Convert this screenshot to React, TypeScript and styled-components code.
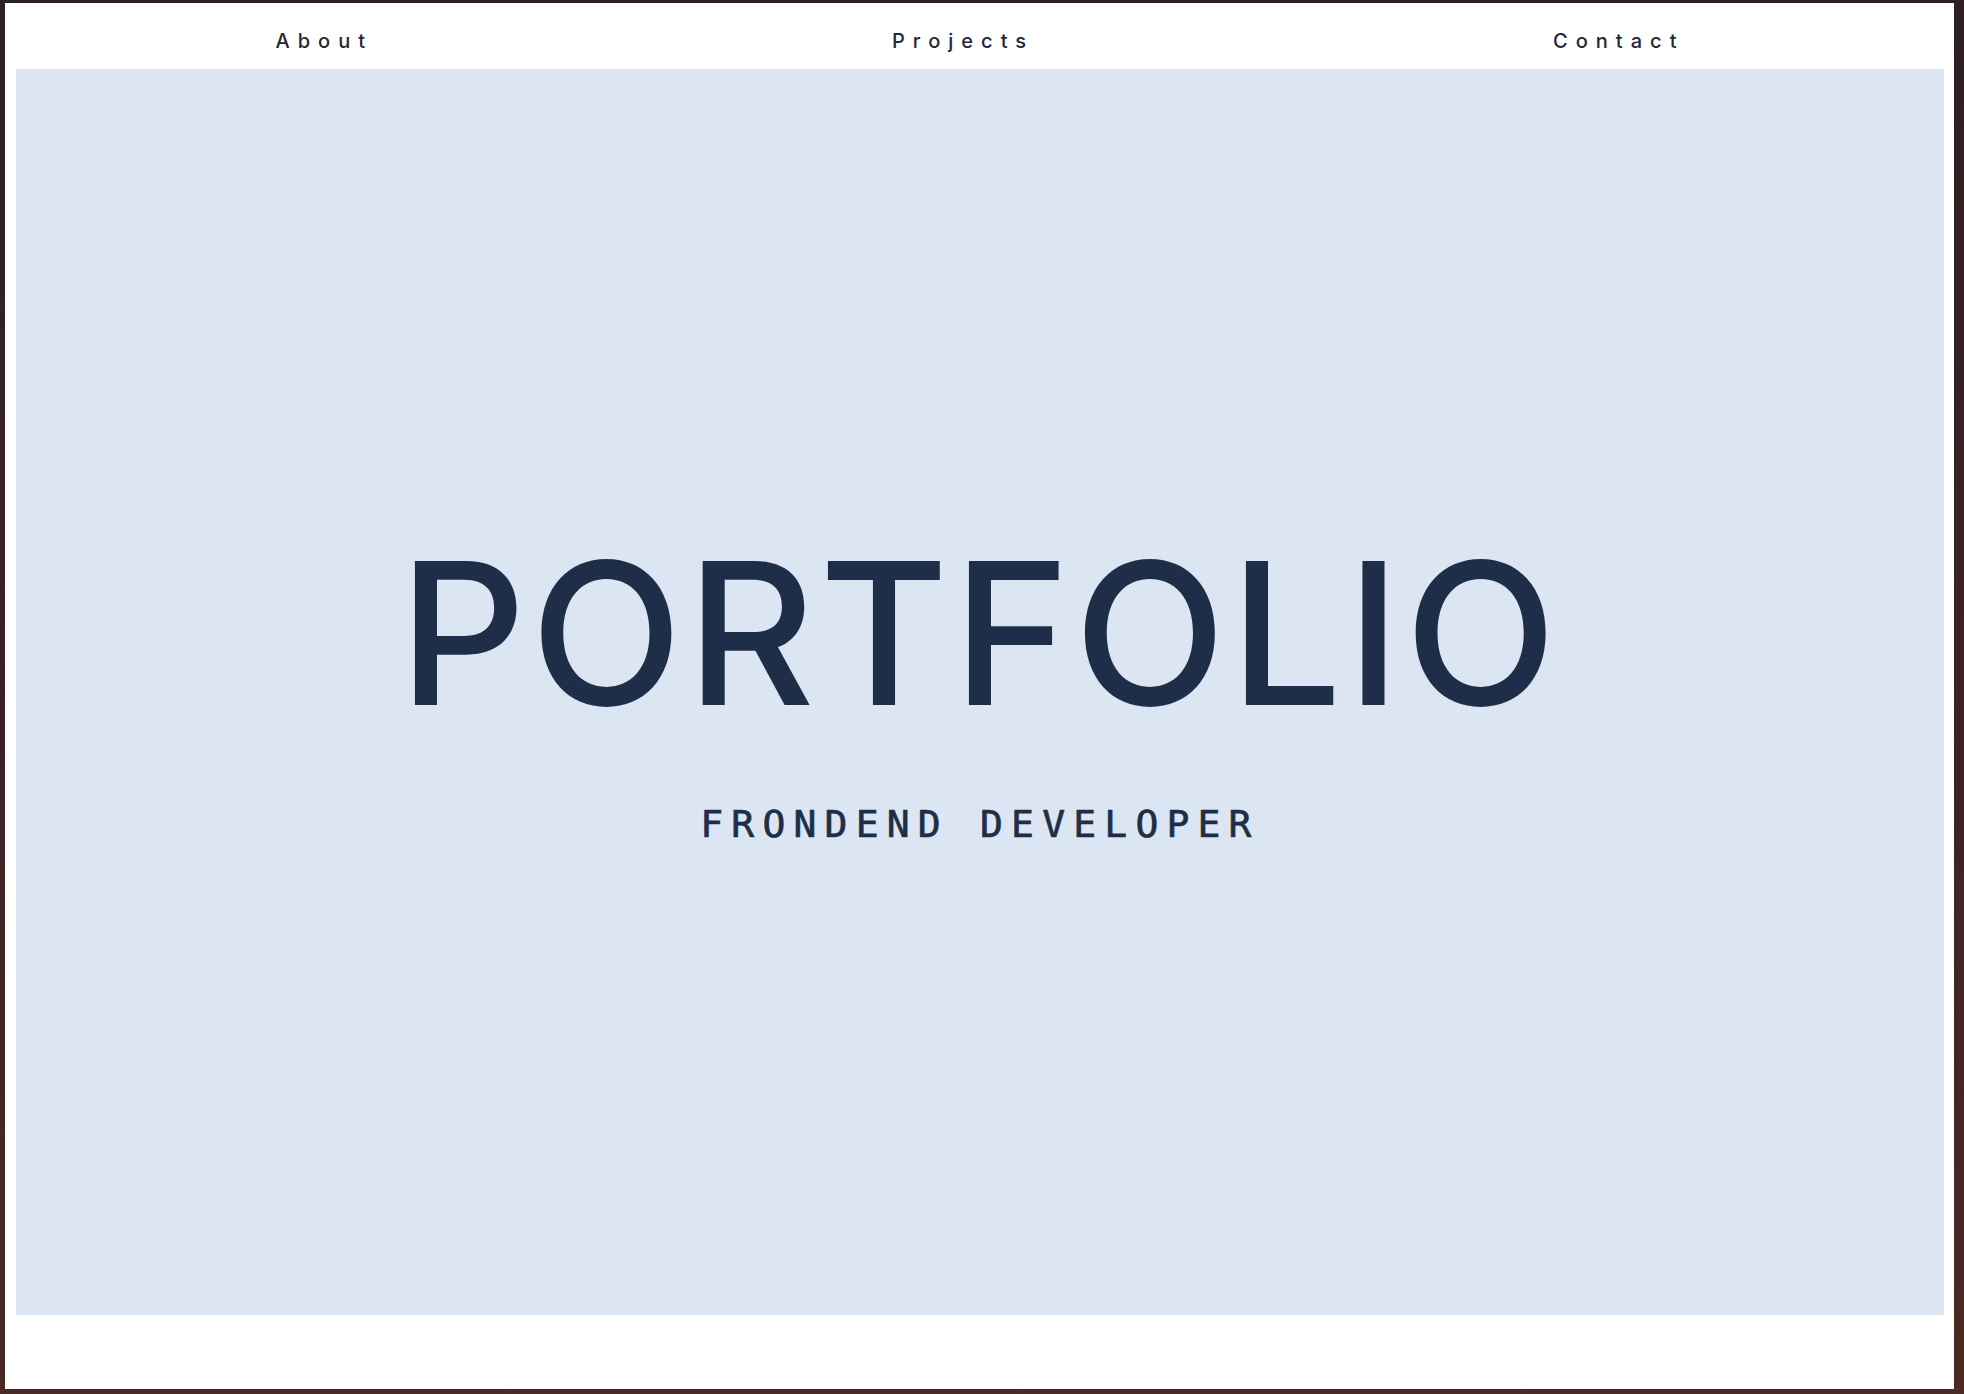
import React from "react";
import styled, { createGlobalStyle } from "styled-components";

const GlobalStyle = createGlobalStyle`
  html, body {
    margin: 0;
    padding: 0;
    background: #3d2426;
  }
  * { box-sizing: border-box; }
`;

const Frame = styled.div`
  width: 1964px;
  height: 1394px;
  padding: 3px 10px 5px 5px;
  background: linear-gradient(180deg, #2e1f22 0%, #3d2426 60%, #4a2a22 100%);
`;

const Page = styled.div`
  height: 100%;
  background: #ffffff;
  padding: 0 10px 74px 11px;
  display: flex;
  flex-direction: column;
`;

const Nav = styled.nav`
  height: 66px;
  padding-top: 9px;
  display: flex;
  justify-content: space-around;
  align-items: center;
`;

const NavLink = styled.a`
  font-family: Inter, "Noto Sans", sans-serif;
  font-size: 20px;
  font-weight: 500;
  letter-spacing: 8px;
  color: #1f2738;
  text-decoration: none;
  cursor: pointer;
`;

const Hero = styled.section`
  flex: 1;
  background: #dce6f2;
  display: flex;
  flex-direction: column;
  align-items: center;
  justify-content: center;
  padding-bottom: 8px;
`;

const Title = styled.h1`
  margin: 0;
  font-family: Inter, "Noto Sans", sans-serif;
  font-size: 198px;
  font-weight: 500;
  line-height: 1;
  letter-spacing: 0.022em;
  color: #1f2e48;
`;

const Subtitle = styled.h2`
  margin: 73px 0 0 0;
  font-family: "DejaVu Sans Mono", "Liberation Mono", monospace;
  font-size: 38px;
  font-weight: 400;
  -webkit-text-stroke: 0.7px #1f2e48;
  line-height: 1;
  letter-spacing: 8.2px;
  color: #1f2e48;
`;

export default function App() {
  return (
    <>
      <GlobalStyle />
      <Frame>
        <Page>
          <Nav>
            <NavLink>About</NavLink>
            <NavLink>Projects</NavLink>
            <NavLink>Contact</NavLink>
          </Nav>
          <Hero>
            <Title>PORTFOLIO</Title>
            <Subtitle>FRONDEND DEVELOPER</Subtitle>
          </Hero>
        </Page>
      </Frame>
    </>
  );
}
